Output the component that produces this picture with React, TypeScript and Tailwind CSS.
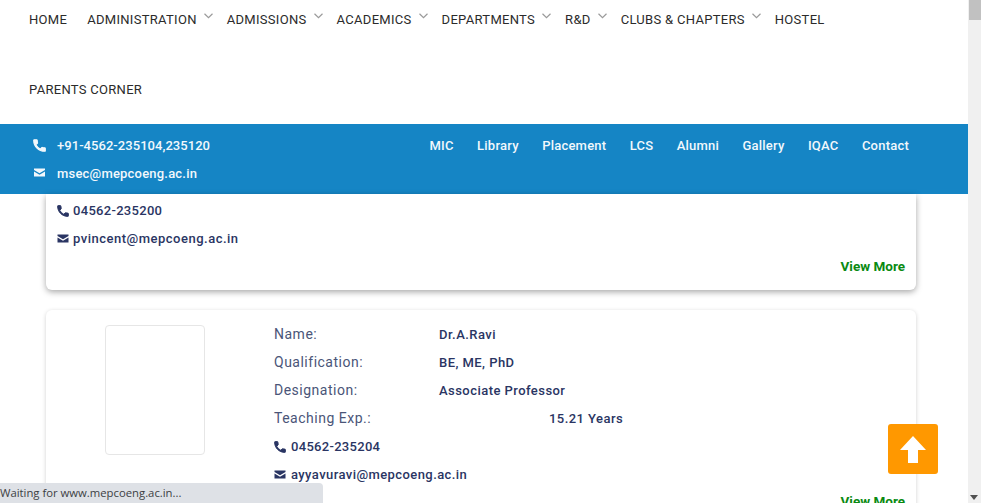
const navItems = [
  { label: "HOME", gap: "mr-5" },
  { label: "ADMINISTRATION", caret: true },
  { label: "ADMISSIONS", caret: true },
  { label: "ACADEMICS", caret: true },
  { label: "DEPARTMENTS", caret: true },
  { label: "R&D", caret: true },
  { label: "CLUBS & CHAPTERS", caret: true },
  { label: "HOSTEL", gap: "mr-10" },
  { label: "PARENTS CORNER" },
];

const topLinks = ["MIC", "Library", "Placement", "LCS", "Alumni", "Gallery", "IQAC", "Contact"];

function Caret() {
  return (
    <svg width="9" height="6" viewBox="0 0 9 6" className="ml-[7px] mr-[14px] mb-[8px]" fill="none" stroke="#9a9a9a" strokeWidth="1.2">
      <path d="M0.5 0.8 L4.5 4.6 L8.5 0.8" />
    </svg>
  );
}

function PhoneGlyph({ className }: { className: string }) {
  return (
    <svg viewBox="2 2 20 20" className={className} fill="currentColor" stroke="currentColor" strokeWidth="1.6" strokeLinejoin="round">
      <path d="M6.6 10.8a15 15 0 0 0 6.6 6.6l2.2-2.2a1 1 0 0 1 1-.25c1.1.37 2.3.57 3.6.57a1 1 0 0 1 1 1V20a1 1 0 0 1-1 1C10.6 21 3 13.4 3 4a1 1 0 0 1 1-1h3.5a1 1 0 0 1 1 1c0 1.25.2 2.45.57 3.57a1 1 0 0 1-.25 1z" />
    </svg>
  );
}

function MailGlyph({ className }: { className: string }) {
  return (
    <svg viewBox="0 0 24 18" className={className} fill="currentColor">
      <path d="M1 1h22v3l-11 6.5L1 4zM1 7l11 6.5L23 7v10H1z" />
    </svg>
  );
}

function Row({ label, value, wide }: { label: string; value: string; wide?: boolean }) {
  return (
    <div className="flex h-7 items-center">
      <span className="w-[165px] text-[14px] tracking-[0.5px] text-[#4a5578]">{label}</span>
      <span className={`${wide ? "ml-[110px]" : ""} pt-[1px] text-[13px] font-medium tracking-[0.45px] text-[#2a3563]`}>{value}</span>
    </div>
  );
}

function Contact({ phone, email, gap, spacing }: { phone: string; email: string; gap: string; spacing: string }) {
  return (
    <div className="text-[13px] font-medium text-[#2a3563]">
      <div className={`flex h-7 items-center tracking-[0.3px] ${gap}`}>
        <PhoneGlyph className="h-3 w-3" />
        {phone}
      </div>
      <div className={`flex h-7 items-center ${spacing} ${gap}`}>
        <MailGlyph className="mb-[2px] h-[9px] w-3" />
        {email}
      </div>
    </div>
  );
}

export default function App() {
  return (
    <div className="relative flex h-[503px] w-[981px] overflow-hidden bg-white font-['Roboto',sans-serif]">
      <div className="w-[968px] shrink-0">
        <header className="flex h-[124px] flex-wrap content-start gap-y-[30px] pl-[29px]">
          {navItems.map((item) => (
            <a key={item.label} className={`flex h-[40px] items-center text-[13px] tracking-[0.3px] text-[#2b2b2b] ${item.gap ?? ""}`}>
              {item.label}
              {item.caret && <Caret />}
            </a>
          ))}
        </header>

        <div className="flex h-[70px] justify-between bg-[#1585c5] pl-[33px] pr-[59px] text-[13px] font-medium text-[#f2f8fc]">
          <div>
            <div className="flex h-[44px] items-center gap-[11px] tracking-[0.05px]">
              <PhoneGlyph className="mb-[2px] h-[13px] w-[13px]" />
              +91-4562-235104,235120
            </div>
            <div className="flex h-[12px] items-center gap-[11px] tracking-[0.2px]">
              <MailGlyph className="mb-[3px] h-[9px] w-[13px]" />
              msec@mepcoeng.ac.in
            </div>
          </div>
          <nav className="flex h-[44px] items-center gap-[23.4px] tracking-[0.22px]">
            {topLinks.map((link) => (
              <a key={link}>{link}</a>
            ))}
          </nav>
        </div>

        <section className="ml-[46px] mr-[52px] h-[96px] rounded-b-md bg-white px-[11px] shadow-[0_2px_6px_rgba(0,0,0,0.35)]">
          <div className="pt-[3px]">
            <Contact phone="04562-235200" email="pvincent@mepcoeng.ac.in" gap="gap-[4px]" spacing="tracking-[0.5px]" />
          </div>
          <div className="mt-[1px] flex h-[24px] items-center justify-end text-[13.5px] font-bold text-[#0a8a12]">View More</div>
        </section>

        <section className="ml-[46px] mr-[52px] mt-5 flex h-[220px] rounded-md bg-white pt-[10px] shadow-[0_1px_4px_rgba(0,0,0,0.18)]">
          <div className="ml-[59px] mt-[5px] h-[130px] w-[100px] shrink-0 rounded-sm border border-[#e6e6e6]" />
          <div className="ml-[69px] flex-1">
            <Row label="Name:" value="Dr.A.Ravi" />
            <Row label="Qualification:" value="BE, ME, PhD" />
            <Row label="Designation:" value="Associate Professor" />
            <Row label="Teaching Exp.:" value="15.21 Years" wide />
            <div className="pt-[1px]">
              <Contact phone="04562-235204" email="ayyavuravi@mepcoeng.ac.in" gap="gap-[5px]" spacing="tracking-[0.42px]" />
            </div>
            <div className="flex h-[24px] items-center justify-end pr-[11px] text-[13.5px] font-bold text-[#0a8a12]">View More</div>
          </div>
        </section>
      </div>

      <aside className="flex w-[13px] shrink-0 flex-col bg-[#f0f0f0]">
        <div className="ml-[1px] h-5 bg-[#c1c1c1]" />
        <div className="mt-auto mb-[3px] ml-[2px] h-0 w-0 border-x-[4px] border-t-[5px] border-x-transparent border-t-[#505050]" />
      </aside>

      <button className="absolute left-[888px] top-[424px] flex h-[50px] w-[50px] items-center justify-center rounded-[3px] bg-[#ff9800]">
        <svg width="28" height="28" viewBox="0 0 28 28" fill="white">
          <path d="M14 1 L27 15 H19 V28 H9 V15 H1 Z" />
        </svg>
      </button>

      <div className="absolute bottom-0 left-0 flex h-[20px] w-[323px] items-center rounded-tr-sm bg-[#dee1e6] font-['Open_Sans',sans-serif] text-[11.3px] text-[#3c4043]">
        Waiting for www.mepcoeng.ac.in...
      </div>
    </div>
  );
}
